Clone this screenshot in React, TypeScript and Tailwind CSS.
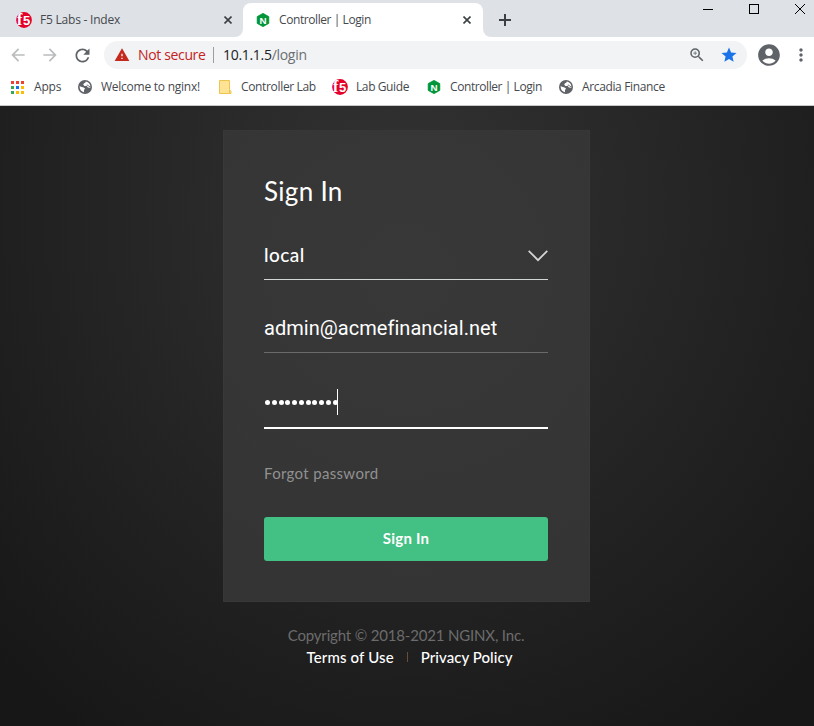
import React from "react";
import {
  MdArrowBack,
  MdArrowForward,
  MdRefresh,
  MdWarning,
  MdZoomIn,
  MdStar,
  MdAccountCircle,
  MdMoreVert,
} from "react-icons/md";

function F5Logo() {
  return (
    <svg viewBox="0 0 16 16" className="block size-4">
      <circle cx="8" cy="8" r="7.9" fill="#e4002b" />
      <text x="1" y="13.4" fontFamily="Liberation Serif, serif" fontWeight="700" fontSize="16" fill="#fff">f</text>
      <text x="7" y="13.1" fontFamily="Liberation Sans, sans-serif" fontWeight="700" fontSize="13" fill="#fff">5</text>
    </svg>
  );
}

function NginxLogo() {
  return (
    <svg viewBox="0 0 14 14" className="block size-3.5">
      <path d="M7 .3 12.9 3.6v6.8L7 13.7 1.1 10.4V3.6z" fill="#009639" stroke="#009639" strokeWidth=".6" strokeLinejoin="round" />
      <text x="7" y="10.5" textAnchor="middle" fontFamily="Liberation Sans, sans-serif" fontWeight="700" fontSize="9.8" fill="#fff">N</text>
    </svg>
  );
}

function Globe() {
  return (
    <svg viewBox="0 0 14 14" className="block size-3.5">
      <circle cx="7" cy="7" r="7" fill="#5f6368" />
      <path d="M1.5 6.2 5.6 7.5q1.5.5 1.4 1.5l-1 .7v2.5Q2 11.5 1.5 6.2M7.8 1.6q-.2 1.5-1.8 1.7L5.2 4.8l1.3 1.3h2.3l1.1 1.5 2.5.2q.3-3.9-2.6-5.6" fill="#fff" />
      <path d="M8.6 5.2h1.5l.8 1.2 1.5.2" fill="none" stroke="#5f6368" strokeWidth=".8" />
    </svg>
  );
}

function Folder() {
  return (
    <svg viewBox="0 0 13 14" className="block h-3.5 w-[13px]">
      <path d="M.5.5h10v9l1.5 2v2H.5z" fill="#ffe394" stroke="#eec44e" />
      <path d="M10.5 9.5v4" stroke="#eec44e" />
    </svg>
  );
}

const APP_DOTS = ["#ea4335", "#ea4335", "#ea4335", "#34a853", "#1a73e8", "#fbbc04", "#34a853", "#fbbc04", "#fbbc04"];

function AppsGrid() {
  return (
    <svg viewBox="0 0 13 13" className="ml-px block size-[13px]">
      {APP_DOTS.map((c, i) => (
        <rect key={i} x={(i % 3) * 5} y={Math.floor(i / 3) * 5} width="3" height="3" fill={c} />
      ))}
    </svg>
  );
}

function Cross() {
  return (
    <svg viewBox="0 0 8 8" className="block size-2 shrink-0" stroke="#3c4043" strokeWidth="1.6">
      <path d="m.5.5 7 7m0-7-7 7" />
    </svg>
  );
}

const bookmarks = [
  { icon: <AppsGrid />, label: "Apps", box: "w-[68px]", pad: "w-6", track: "tracking-[-0.2px]" },
  { icon: <Globe />, label: "Welcome to nginx!", box: "w-[141px]", pad: "w-[23px]", track: "tracking-[-0.25px]" },
  { icon: <Folder />, label: "Controller Lab", box: "w-[113px]", pad: "w-[22px]", track: "tracking-[-0.34px]" },
  { icon: <F5Logo />, label: "Lab Guide", box: "w-[95px]", pad: "w-6", track: "tracking-[-0.4px]" },
  { icon: <NginxLogo />, label: "Controller | Login", box: "w-[132px]", pad: "w-[23px]", track: "tracking-[-0.42px]" },
  { icon: <Globe />, label: "Arcadia Finance", box: "w-[120px]", pad: "w-[23px]", track: "tracking-[-0.36px]" },
];

function TabStrip() {
  return (
    <div className="flex h-[37px] bg-[#dee1e6] text-[12px] text-[#45494d]">
      <div className="flex h-full w-[243px] items-center pt-[3px] pl-4">
        <F5Logo />
        <span className="ml-2 w-[184px] whitespace-nowrap tracking-[-0.22px]">F5 Labs - Index</span>
        <Cross />
      </div>
      <div className="relative mt-[3px] flex h-[34px] w-[240px] items-center rounded-t-lg bg-white pl-[13px]">
        <svg viewBox="0 0 8 8" className="absolute bottom-0 -left-2 size-2"><path d="M8 0v8H0a8 8 0 0 0 8-8" fill="#fff" /></svg>
        <NginxLogo />
        <span className="ml-[9px] w-[184px] whitespace-nowrap tracking-[-0.42px]">Controller | Login</span>
        <Cross />
        <svg viewBox="0 0 8 8" className="absolute -right-2 bottom-0 size-2"><path d="M0 0v8h8a8 8 0 0 1-8-8" fill="#fff" /></svg>
      </div>
      <svg viewBox="0 0 12 12" className="mt-[14px] ml-4 size-3" stroke="#3c4043" strokeWidth="2"><path d="M6 0v12M0 6h12" /></svg>
      <svg viewBox="0 0 104 12" className="mt-[3px] ml-auto mr-[8px] h-3 w-[104px]" fill="none" stroke="#000" shapeRendering="crispEdges">
        <path d="M1 6.5h10M47.5 1.5h9v9h-9z" />
        <path d="m93 1 10 10m0-10L93 11" shapeRendering="auto" />
      </svg>
    </div>
  );
}

function Toolbar() {
  return (
    <div className="flex h-9 items-center bg-white text-[#5f6368]">
      <MdArrowBack className="ml-2 size-5 text-[#babcbe]" />
      <MdArrowForward className="ml-3 size-5 text-[#babcbe]" />
      <MdRefresh className="ml-3 size-[21px]" />
      <div className="ml-[11px] flex h-7 w-[643px] items-center rounded-full bg-[#f1f3f4] text-[14px]">
        <MdWarning className="ml-2.5 size-4 text-[#c5281c]" />
        <span className="ml-2 w-[75px] pb-0.5 whitespace-nowrap tracking-[-0.35px] text-[#c5221f]">Not secure</span>
        <span className="h-4 w-px bg-[#9a9da1]" />
        <span className="ml-[9px] pb-0.5 whitespace-nowrap tracking-[-0.3px] text-[#202124]">10.1.1.5<span className="text-[#6b6f73]">/login</span></span>
        <MdZoomIn className="ml-auto size-[18px]" />
        <MdStar className="mr-[9px] ml-[14px] size-[18px] text-[#1a73e8]" />
      </div>
      <MdAccountCircle className="ml-[9px] size-[26px]" />
      <MdMoreVert className="ml-[9px] size-[20px]" />
    </div>
  );
}

function SignInCard() {
  return (
    <main className="flex h-[472px] w-[367px] flex-col border border-white/[0.02] bg-[radial-gradient(circle_420px_at_50%_30%,#383838,#333333)] pr-[41px] pl-10 text-white">
      <h1 className="mt-[42px] h-9 text-[26px] leading-9 tracking-[0.3px]">Sign In</h1>
      <div className="mt-[29px] flex h-[42px] items-start justify-between border-b border-[#d2d7d5]">
        <span className="text-[19px] leading-[34px] font-medium tracking-[0.45px]">local</span>
        <svg viewBox="0 0 20 12" className="mt-[12px] h-3 w-5" fill="none" stroke="#d4d4d4" strokeWidth="1.8"><path d="m.7.8 9.3 9.4L19.3.8" /></svg>
      </div>
      <div className="mt-[31px] h-[42px] border-b border-[#6a6a6a] font-[Roboto,sans-serif] text-[20px] leading-[34px] tracking-[0.04px]">admin@acmefinancial.net</div>
      <div className="mt-[35px] flex h-[41px] border-b-2 border-white">
        <span className="mt-[12px] flex h-[5px] gap-[1.75px] pl-px">
          {Array.from({ length: 11 }, (_, i) => <i key={i} className="size-[5px] rounded-full bg-white" />)}
        </span>
        <span className="mt-px -ml-px h-[26px] w-px bg-white" />
      </div>
      <a className="mt-[32px] text-[15px] leading-6 tracking-[0.33px] text-[#919191]">Forgot password</a>
      <button className="mt-[32px] h-11 rounded-[3px] bg-[#43c083] pb-0.5 text-[15px] font-bold tracking-[0.25px]">Sign In</button>
    </main>
  );
}

export default function App() {
  return (
    <div className="flex h-[726px] w-[814px] flex-col overflow-hidden font-['Open_Sans','Noto_Sans',sans-serif]">
      <TabStrip />
      <Toolbar />
      <nav className="flex h-[33px] items-start border-b border-[#c8c8c8] bg-white pl-2.5 text-[12px] text-[#45494d]">
        {bookmarks.map((b) => (
          <div key={b.label} className={`flex h-7 shrink-0 items-center ${b.box}`}>
            <span className={`shrink-0 ${b.pad}`}>{b.icon}</span>
            <span className={`whitespace-nowrap ${b.track}`}>{b.label}</span>
          </div>
        ))}
      </nav>
      <section className="flex flex-1 flex-col items-center bg-[radial-gradient(ellipse_580px_640px_at_406px_100px,#333333_0%,#171717_100%)] pt-6 pr-px font-[Lato,sans-serif]">
        <SignInCard />
        <footer className="mt-[22px] text-center text-[15px] leading-[22px] text-white">
          <p className="pr-px tracking-[-0.17px] text-[#6c6c6c]">Copyright © 2018-2021 NGINX, Inc.</p>
          <p className="flex items-center justify-center pl-1.5 font-medium">
            <a className="tracking-[0.15px]">Terms of Use</a>
            <span className="mx-[13px] h-2.5 w-px bg-[#664f38]" />
            <a className="tracking-[0.05px]">Privacy Policy</a>
          </p>
        </footer>
      </section>
    </div>
  );
}
